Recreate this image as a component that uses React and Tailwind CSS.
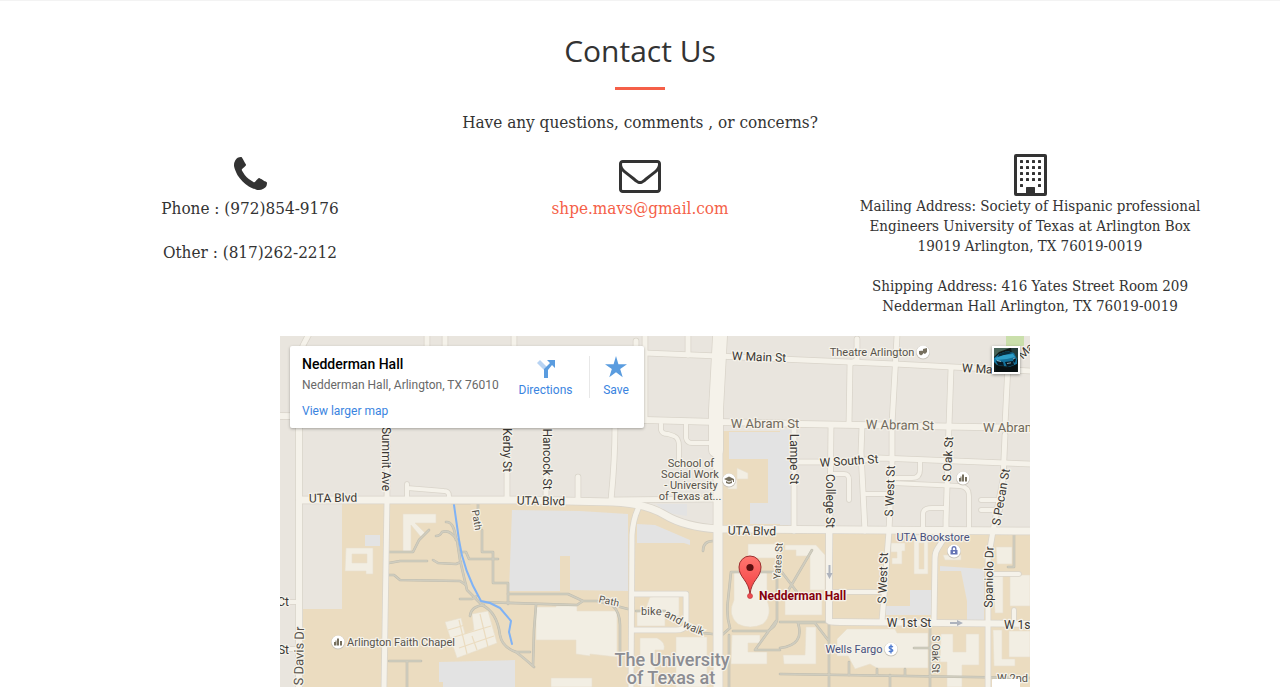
import React from 'react';

const SERIF = "font-['DejaVu_Serif_Condensed','DejaVu_Serif',serif]";

function PhoneIcon() {
  return (
    <svg aria-hidden="true" viewBox="0 128 1408 1408" className="h-[33px] w-[33px] fill-[#333333]">
      <path d="M1408 1240q0 27-10 70.5t-21 68.5q-21 50-122 106-94 51-186 51-27 0-53-3.5t-57.5-12.5-47-14.5-55.5-20.5-49-18q-98-35-175-83-127-79-264-216t-216-264q-48-77-83-175-3-9-18-49t-20.5-55.5-14.5-47-12.5-57.5-3.5-53q0-92 51-186 56-101 106-122 25-11 68.5-21t70.5-10q14 0 21 3 18 6 53 76 11 19 30 54t35 63.5 31 53.5q3 4 17.5 25t21.5 35.5 7 28.5q0 20-28.5 50t-62 55-62 53-28.5 46q0 9 5 22.5t8.5 20.5 14 24 11.5 19q76 137 174 235t235 174q2 1 19 11.5t24 14 20.5 8.5 22.5 5q18 0 46-28.5t53-62 55-62 50-28.5q14 0 28.5 7t35.5 21.5 25 17.5q25 15 53.5 31t63.5 35 54 30q70 35 76 53 3 7 3 21z" />
    </svg>
  );
}

function EnvelopeIcon() {
  return (
    <svg aria-hidden="true" viewBox="0 256 1792 1408" className="h-[33px] w-[42px] fill-[#333333]">
      <path d="M1664 1504v-768q-32 36-69 66-268 206-426 338-51 43-83 67t-86.5 48.500-102.5 24.500h-2q-48 0-102.500-24.500t-86.500-48.500-83-67q-158-132-426-338-37-30-69-66v768q0 13 9.500 22.500t22.500 9.500h1472q13 0 22.500-9.500t9.500-22.500zm0-1051v-24.500l-.5-13-3-12.500-5.500-9-9-7.500-14-2.500h-1472q-13 0-22.500 9.500t-9.500 22.500q0 168 147 284 193 152 401 317 6 5 35 29.500t46 37.500 44.500 31.500 50.500 27.500 43 9h2q20 0 43-9t50.500-27.500 44.500-31.500 46-37.500 35-29.500q208-165 401-317 54-43 100.500-115.500t46.500-131.500zm128-37v1088q0 66-47 113t-113 47h-1472q-66 0-113-47t-47-113v-1088q0-66 47-113t113-47h1472q66 0 113 47t47 113z" />
    </svg>
  );
}

function BuildingIcon() {
  const windows = [];
  for (let row = 0; row < 5; row++) {
    for (let col = 0; col < 4; col++) {
      if (row === 4 && (col === 1 || col === 2)) continue;
      windows.push(<rect key={`${row}-${col}`} x={6 + col * 6} y={6 + row * 6} width="3" height="3" rx=".6" />);
    }
  }
  return (
    <svg aria-hidden="true" viewBox="0 0 33 42" className="h-[42px] w-[33px] fill-[#333333]">
      <rect x="1.500" y="1.500" width="30" height="39" rx=".5" className="fill-none stroke-[#333333]" strokeWidth="3" strokeLinejoin="round" />
      {windows}
      <rect x="12" y="33" width="9" height="8" rx=".6" />
    </svg>
  );
}

const ROADS = [
  [5, 'M308 336Q298 352 297 372L299 420'],
  [5, 'M427 336V350M445 336V350M514 336V350M636 341V350'],
  [5, 'M645 336V420'],
  [5, 'M688 336V355'],
  [5, 'M645 353L718 356L780 359L895 364L1030 371'],
  [6, 'M280 416L645 420L718 422L800 424L1030 428'],
  [5, 'M387 428V500L384 687'],
  [5, 'M507 428V500M546 428V500M578 477V500'],
  [5, 'M615 425Q615 460 611 500L718 499'],
  [4, 'M661 424V430Q662 434 668 434L674 436Q679 438 679 446V460'],
  [4, 'M686 424V438Q687 443 692 443H716'],
  [4, 'M407 500V484M407 488L444 491Q449 491 449 496V500'],
  [5, 'M794 425V531'],
  [5, 'M831 425L829 621'],
  [4, 'M833 474H844Q849 474 849 480V500'],
  [5, 'M857 339V360L850 364L849 424M862 426L861 452L865 531'],
  [5, 'M897 336L892 424V462L889 531L882 621'],
  [5, 'M951 369L949 425L946 520V535L938 548Q935 552 935 558L934 621'],
  [5, 'M1008 365L1005 425M1005 435L1003 480L993 531L988 560V687'],
  [4, 'M920 461V470Q920 478 912 478H895'],
  [4, 'M892 483L960 486Q969 487 969 496V531'],
  [4, 'M863 494H890'],
  [4, 'M923 531V514Q923 508 932 508H946'],
  [4, 'M981 500H1002M981 510H1000'],
  [5, 'M797 462H850L880 458L1030 464'],
  [4, 'M830 592H882'],
  [5, 'M633 594H686V625Q684 630 676 630H633'],
  [4, 'M280 602H297M280 649H297M989 574H1019M1014 623V610'],
  [5, 'M638 509Q633 520 632 535L631 687'],
  [6, 'M299 416V687'],
  [7, 'M300 500H520L612 502Q645 503 665 515T718 529L1030 531'],
  [6, 'M829 531V621Q830 622 840 622L1030 624'],
  [9, 'M718 440V687'],
  [14, 'M720 336L716 410V450'],
];

const WALKWAYS = [
  'M389 552H413L419 540L429 530',
  'M389 563L400 561H427M433 560L438 563L456 564L461 562',
  'M389 575H394L400 580L460 581L466 585',
  'M436 536Q440 536 442 532Q450 529 457 540L460 560L467 590L482 605Q497 612 500 635Q502 647 516 652Q524 658 534 667',
  'M446 522Q454 521 456 540M460 552H466L469 559H498M470 503H452M478 504V515M482 530V552H493V583H508V604M460 599H472L477 596',
  'M508 594H568L583 601L577 605L480 602M583 601H597L628 609M612 605Q620 612 620 625V658',
  'M536 605L534 630L533 665M470 616Q471 606 484 605M389 661H421M407 662V687',
  'M516 652H530M636 611H665M695 631L703 633L722 635L730 628M730 628Q726 615 728 600L731 572H777V620Q776 626 768 631H733',
  'M776 621L755 650H780M729 635V687M703 551Q703 541 713 541M781 571L800 596M812 550L785 596M780 622H829V687M780 674L1030 678',
  'M780 648Q805 645 798 623H815L828 640M890 675V687M930 622V687M914 648H930M849 662V675M877 669V675M905 669V675M1014 535V567H1008',
];

const BUILDINGS = [
  'M403 514H436V523H415L425 533L421 537L411 525V551H403Z',
  'M346 548H373V574H366V571H345ZM352 554H367V563H352Z',
  'M445 622L461 618L465 634L474 630L472 614L488 611L497 643L457 658Z',
  'M536 607H556V606H577V611H617V657L590 654V656L576 654V640H555V640H536Z',
  'M551 678H592V687H551ZM637 612L645 611L650 597L664 595H679V616H665V626H637Z',
  'M640 638H657Q666 642 664 650H655V687H640ZM676 637H707V687H676Z',
  'M728 480H737V468L748 473V479H737V489H728Z',
  'M748 544H777V558H748ZM734 573Q750 567 767 573V600Q773 615 763 624Q750 630 738 624Q727 615 734 600Z',
  'M732 635H760V643H748V652H767V664H731Z',
  'M785 545H816L825 555V590H810V556H796V550H785ZM785 600H822V615H785Z',
  'M837 639L847 629H895L897 633H928V668H877L870 664L855 669L848 656H837Z',
  'M891 543H905V551H902V564H892V558H897V552H891Z',
  'M914 535H928V574H914ZM919 543H924V569H919Z',
  'M943 555H961V560H945ZM996 547H1012V564H997Z',
  'M1010 575H1030V606H1010ZM993 573H1003V613H995Z',
  'M941 634H953V652H966V634H979V665H962V687H947V662H940Z',
  'M993 630H1002V659H1015V666H994ZM1009 631H1030V657H1009ZM783 655H805L806 627H816V664H784Z',
];

function MapLabel({ x, y, angle = 0, className = 'text-[12px] fill-[#3a3733]', anchor = 'middle', children }) {
  return (
    <text
      x={x}
      y={y}
      transform={angle ? `rotate(${angle} ${x} ${y})` : undefined}
      textAnchor={anchor}
      dominantBaseline="central"
      stroke="#f5f2ea"
      strokeWidth="2.5"
      strokeLinejoin="round"
      paintOrder="stroke"
      className={className}
    >
      {children}
    </text>
  );
}

function Poi({ x, y, children }) {
  return (
    <g>
      <circle cx={x} cy={y + 0.5} r="7" fill="#c9c4ba" />
      <circle cx={x} cy={y} r="6.5" fill="#fff" />
      <g transform={`translate(${x} ${y})`} fill="#77705f">{children}</g>
    </g>
  );
}

const museum = <path d="M-4 3.500V0h2v3.500zM-1 3.500V-3L0-4l1 1v6.500zM2 3.500V-1h2v4.500zM-2.500 3.500v-5h1v5z" />;

function CampusMap() {
  const small = 'text-[11px] fill-[#57524b]';
  const big = 'text-[13px] fill-[#716a5c]';
  const navy = 'text-[11px] fill-[#47507c]';
  return (
    <svg
      role="img"
      aria-label="Street map around Nedderman Hall"
      viewBox="280 336 750 351"
      preserveAspectRatio="xMidYMin slice"
      className="block h-full w-full font-[Roboto,sans-serif]"
    >
      <rect x="280" y="336" width="750" height="351" fill="#e9e5de" />
      <path fill="#ebdcc0" d="M342 500H625Q645 501 665 514T718 527V431H788V531H1030V687H303V609H342Z" />
      <path fill="#cadfab" d="M1006 336H1024V346H1006Z" />
      <path fill="#e3e3e3" d="M512 510L580 511L628 514V591L570 590V556H560V591L509 591ZM637 524L655 525L690 540V545L684 543H637ZM656 504H687V516L668 513ZM729 432H789V524H750V503H768V459H729ZM780 430H792V525H780ZM439 662L515 660V687H443V682H439ZM365 535H380V546H365ZM910 590H932V615H886V606H910ZM940 566L984 569V620H967V601L961 571H940Z" />
      <g fill="#f2eee3" stroke="#e7dfcd" strokeWidth=".6" fillRule="evenodd">
        {BUILDINGS.map((d) => <path key={d} d={d} />)}
      </g>
      <path fill="none" stroke="#ebdcc0" strokeWidth="1.2" d="M451 638L491 626M448 630L465 625M459 648L494 636M459 620L467 654M480 614L488 647M472 636L477 650" />
      <g fill="none" strokeLinejoin="round" strokeLinecap="round">
        {WALKWAYS.map((d) => <path key={d} d={d} stroke="#bfbcae" strokeWidth="2.6" />)}
        {WALKWAYS.map((d) => <path key={`${d}-top`} d={d} stroke="#d0cdbf" strokeWidth="1.6" />)}
        <path d="M454 505L459 540Q463 570 481 601L490 603L500 608L511 621L509 632L512 644" stroke="#7fb2f5" strokeWidth="2" />
        {ROADS.map(([w, d]) => <path key={d} d={d} stroke="#d9d4ca" strokeWidth={w + 1.5} />)}
        {ROADS.map(([w, d]) => <path key={`${d}-top`} d={d} stroke="#f5f2ea" strokeWidth={w} />)}
      </g>
      <path fill="#aeb3bd" d="M828.500 565h2v8h2l-3 6-3-6h2zM950 622h7v-2l6 3-6 3v-2h-7z" />

      <MapLabel x={759} y={357} angle={2}>W Main St</MapLabel>
      <MapLabel x={962} y={368} angle={3} anchor="start">W Ma</MapLabel>
      <MapLabel x={1020} y={357} angle={-45} anchor="start">Ma</MapLabel>
      <MapLabel x={765} y={423} className={big}>W Abram St</MapLabel>
      <MapLabel x={900} y={425} angle={1} className={big}>W Abram St</MapLabel>
      <MapLabel x={983} y={427} className={big} anchor="start">W Abram St</MapLabel>
      <MapLabel x={849} y={461} angle={-4}>W South St</MapLabel>
      <MapLabel x={333} y={498} angle={-1}>UTA Blvd</MapLabel>
      <MapLabel x={541} y={501} angle={1}>UTA Blvd</MapLabel>
      <MapLabel x={752} y={531} angle={1}>UTA Blvd</MapLabel>
      <MapLabel x={386} y={459} angle={90}>Summit Ave</MapLabel>
      <MapLabel x={507} y={450} angle={90}>Kerby St</MapLabel>
      <MapLabel x={547} y={459} angle={90}>Hancock St</MapLabel>
      <MapLabel x={794} y={459} angle={90}>Lampe St</MapLabel>
      <MapLabel x={830} y={501} angle={90}>College St</MapLabel>
      <MapLabel x={890} y={491} angle={-88}>S West St</MapLabel>
      <MapLabel x={883} y={578} angle={-88}>S West St</MapLabel>
      <MapLabel x={948} y={459} angle={-87}>S Oak St</MapLabel>
      <MapLabel x={1001} y={497} angle={-80}>S Pecan St</MapLabel>
      <MapLabel x={989} y={577} angle={-89}>Spaniolo Dr</MapLabel>
      <MapLabel x={299} y={656} angle={-89} className="fill-[#57524b] text-[13px]">S Davis Dr</MapLabel>
      <MapLabel x={778} y={561} angle={-86} className="fill-[#57524b] text-[10px]">Yates St</MapLabel>
      <MapLabel x={935} y={654} angle={90} className="fill-[#57524b] text-[10px]">S Oak St</MapLabel>
      <MapLabel x={909} y={623}>W 1st St</MapLabel>
      <MapLabel x={1004} y={625} anchor="start">W 1st St</MapLabel>
      <MapLabel x={997} y={678} anchor="start" className={small}>W 2nd</MapLabel>
      <MapLabel x={289} y={602} anchor="end">Ct</MapLabel>
      <MapLabel x={289} y={650} anchor="end">St</MapLabel>
      <MapLabel x={477} y={520} angle={80} className="fill-[#57524b] text-[10px]">Path</MapLabel>
      <MapLabel x={609} y={601} angle={12} className="fill-[#57524b] text-[10px]">Path</MapLabel>
      <path id="walk-route" d="M641 615H656C670 615 678 628 704 636" fill="none" />
      <text stroke="#f5f2ea" strokeWidth="2.5" paintOrder="stroke" className="fill-[#57524b] text-[11px]">
        <textPath href="#walk-route">bike and walk</textPath>
      </text>
      <MapLabel x={872} y={352} className={small}>Theatre Arlington</MapLabel>
      <MapLabel x={401} y={642} className={small}>Arlington Faith Chapel</MapLabel>
      <MapLabel x={691} y={463} className={small}>School of</MapLabel>
      <MapLabel x={690} y={474} className={small}>Social Work</MapLabel>
      <MapLabel x={691} y={485} className={small}>- University</MapLabel>
      <MapLabel x={690} y={496} className={small}>of Texas at...</MapLabel>
      <MapLabel x={933} y={537} className={navy}>UTA Bookstore</MapLabel>
      <MapLabel x={854} y={649} className={navy}>Wells Fargo</MapLabel>
      <MapLabel x={672} y={659} className="fill-[#8b8c92] text-[18px] font-medium">The University</MapLabel>
      <MapLabel x={671} y={677} className="fill-[#8b8c92] text-[18px] font-medium">of Texas at</MapLabel>
      <MapLabel x={759} y={596} anchor="start" className="fill-[#85000d] text-[12px] font-bold">Nedderman Hall</MapLabel>

      <Poi x={923} y={352}><path d="M-4-1l4-.5V2l-2 1.500L-4 2zM0-3l4-1v4L2 2 0 1z" /></Poi>
      <Poi x={963} y={478}>{museum}</Poi>
      <Poi x={338} y={642}>{museum}</Poi>
      <Poi x={729} y={480}><path d="M-5-1L0-3.500 5-1v3H4V0L0 1.500zM-3 1L0 2.500 3 1v2L0 4l-3-1z" /></Poi>
      <Poi x={954} y={551}><path fill="#6574b5" fillRule="evenodd" d="M-3.500-1h1v-1.500a2.500 2.500 0 0 1 5 0V-1h1v4.500h-7zM-1.200-1h2.400v-1.300a1.200 1.200 0 0 0-2.400 0zM-1 .5v1.500h2V.5z" /></Poi>
      <Poi x={891} y={649}><path fill="none" stroke="#4f7bd0" strokeWidth="1.300" d="M2-2Q0-3.500-1.600-2.200C-3 .5 2.500-.5 1.800 1.800Q0 3.500-2.200 2M0-4.500V4.500" /></Poi>

      <path d="M750 595C749 580 739 578 739 567a11 11 0 0 1 22 0C761 578 751 580 750 595Z" fill="url(#pin)" stroke="#9c3030" strokeWidth="1" />
      <circle cx="750" cy="567.500" r="3.600" fill="#5c1010" />
      <circle cx="750" cy="596" r="2.500" fill="#ee4b50" stroke="#c53c40" strokeWidth=".7" />
      <defs>
        <linearGradient id="pin" x1="0" x2="0" y1="0" y2="1">
          <stop stopColor="#ff7770" />
          <stop offset="1" stopColor="#f23b3f" />
        </linearGradient>
      </defs>
      <rect x="992" y="679" width="28" height="10" rx="1" fill="#fff" />
    </svg>
  );
}

function AccountPhoto() {
  return (
    <svg aria-hidden="true" viewBox="0 0 24 24" className="block h-6 w-6">
      <rect width="24" height="24" fill="#101918" />
      <path fill="#486459" d="M0 0h16L5 4 0 9z" />
      <path fill="#243c3a" d="M17 0h7v12l-6-6z" />
      <path fill="#14719a" d="M0 10l5-4 8-3 7 2 3 6v5l-5 3-9-1-6-1-3-3z" />
      <path fill="#0a2c3b" d="M5 6l8-3 5 2-7 2-7 2z" />
      <path fill="#2f9fc8" d="M1 10l9-3 9-1 2 3-8 2-11 1z" />
      <path fill="#081a24" d="M2 13l7 1 1 4-6-1zM11 14l8-1 1 4-7 2zM20 10l2 1-1 4-2-2z" />
      <path stroke="#b6d9df" strokeWidth=".7" d="M3 12.500l4 1M13 15.500l4-.7M19 11l2-1" />
      <path fill="#081012" d="M2 17.500l11 2.500 10-4v8H2z" />
    </svg>
  );
}

function PlaceCard() {
  return (
    <div className="absolute left-[10px] top-[10px] flex h-[82px] w-[354px] rounded-xs bg-white pl-3 text-[12px] shadow-[0_1px_3px_rgba(0,0,0,0.3)]">
      <div className="w-[205px] pt-2">
        <h2 className="text-[14px] font-medium leading-5 text-black">Nedderman Hall</h2>
        <p className="whitespace-nowrap leading-[22px] text-[#686868]">Nedderman Hall, Arlington, TX 76010</p>
        <a href="#map" className="block leading-[30px] text-[#3a84df]">View larger map</a>
      </div>
      <a href="#directions" className="flex h-[60px] w-[77px] flex-col items-center pt-3 text-[#3a84df]">
        <svg aria-hidden="true" viewBox="0 0 20 20" className="h-5 w-5">
          <path fill="#b7d3f3" d="M1 5l3-3 7 7-2 4z" />
          <path fill="#5a9cdf" d="M8 20v-9l6-6-3-3h8v8l-3-3-4 5v8z" />
        </svg>
        <span className="leading-6">Directions</span>
      </a>
      <span className="ml-[5px] mt-2.5 h-[42px] w-px bg-[#e8e8e8]" />
      <button type="button" className="flex h-[60px] w-[52px] flex-col items-center pt-2.5 text-[#3a84df]">
        <svg aria-hidden="true" viewBox="0 0 20 20" className="h-[22px] w-[22px] fill-[#5a9cdf]">
          <path d="M10 0l2.200 7.400H20l-6.200 4.500 2.300 7.400L10 14.800l-6.100 4.500 2.300-7.400L0 7.400h7.800z" />
        </svg>
        <span className="leading-6">Save</span>
      </button>
    </div>
  );
}

export default function App() {
  return (
    <section className="border-t border-[#f3f3f3] bg-white text-center text-[#333333]">
      <h1 className="pt-[30px] font-['Open_Sans',sans-serif] text-[30px] leading-10">Contact Us</h1>
      <div className="mx-auto mt-4 h-[3px] w-[50px] bg-[#f55f48]" />
      <p className={`mt-[21px] text-[17px] leading-[22px] ${SERIF}`}>Have any questions, comments , or concerns?</p>

      <div className={`mx-auto mt-[21px] grid max-w-[1170px] grid-cols-3 ${SERIF}`}>
        <div className="flex flex-col items-center pt-[3px]">
          <PhoneIcon />
          <p className="mt-[7px] text-[17px] leading-[22px]">
            Phone : (972)854-9176<br /><br />Other : (817)262-2212
          </p>
        </div>
        <div className="flex flex-col items-center pt-[6px]">
          <EnvelopeIcon />
          <a href="mailto:shpe.mavs@gmail.com" className="mt-1 text-[17px] leading-[22px] text-[#f55f48]">shpe.mavs@gmail.com</a>
        </div>
        <div className="flex flex-col items-center">
          <BuildingIcon />
          <p className="whitespace-nowrap text-[15px] leading-5">
            Mailing Address: Society of Hispanic professional<br />
            Engineers University of Texas at Arlington Box<br />
            19019 Arlington, TX 76019-0019<br /><br />
            Shipping Address: 416 Yates Street Room 209<br />
            Nedderman Hall Arlington, TX 76019-0019
          </p>
        </div>
      </div>

      <div className="mx-auto mt-5 max-w-[780px] pl-[30px] text-left">
        <div id="map" className="relative h-[351px] overflow-hidden font-[Roboto,sans-serif]">
          <CampusMap />
          <PlaceCard />
          <button type="button" aria-label="Account" className="absolute right-[10px] top-[10px] border-2 border-white shadow-[0_1px_3px_rgba(0,0,0,0.4)]">
            <AccountPhoto />
          </button>
        </div>
      </div>
    </section>
  );
}
